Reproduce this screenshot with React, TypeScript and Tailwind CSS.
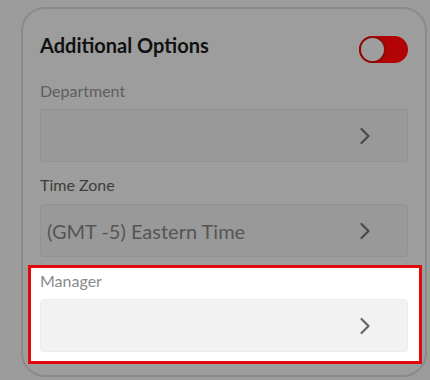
import React from "react";

function Chevron({ color }: { color: string }) {
  return (
    <svg width="12" height="18" viewBox="0 0 12 18" fill="none">
      <path d="M2.5 2 L9.5 9 L2.5 16" stroke={color} strokeWidth="2.2" strokeLinecap="round" strokeLinejoin="round" />
    </svg>
  );
}

export default function App() {
  return (
    <div
      className="w-[430px] h-[380px] bg-[#9c9c9c] overflow-hidden pl-[21px] pt-[7px]"
      style={{ fontFamily: "Lato, 'Open Sans', sans-serif" }}
    >
      <div className="w-[406px] h-[370px] rounded-[24px] border-2 border-[#8a8a8a] bg-[#9d9d9d] px-[17px] pt-[27px]">
        <div className="flex items-start justify-between h-[27px]">
          <span className="text-[20px] font-bold text-[#111] leading-[18px]">Additional Options</span>
          <div className="w-[49px] h-[27px] rounded-full bg-[#b20404] flex items-center p-0">
            <div className="w-[27px] h-[27px] rounded-full bg-[#9e9e9e] border-[2.5px] border-[#8f0a0a]" />
          </div>
        </div>

        <div className="mt-[18px] text-[16px] leading-[20px] text-[#5e5e5e]">Department</div>
        <div className="mt-[8px] h-[53px] rounded-[4px] border border-[#929292] bg-[#999999] flex items-center justify-end pr-[36px]">
          <Chevron color="#4a4a4a" />
        </div>

        <div className="mt-[13px] text-[16px] leading-[20px] text-[#3e3e3e]">Time Zone</div>
        <div className="mt-[9px] h-[53px] rounded-[4px] border border-[#929292] bg-[#999999] flex items-center justify-between pl-[6px] pr-[36px]">
          <span className="text-[20px] text-[#555]">(GMT -5) Eastern Time</span>
          <Chevron color="#4a4a4a" />
        </div>

        <div className="mt-[8px] -ml-[12px] -mr-[14px] h-[99px] border-[3px] border-[#e10a0a] bg-white pl-[9px] pr-[11px] pt-[3px]">
          <div className="text-[16px] leading-[20px] text-[#8a8a8a]">Manager</div>
          <div className="mt-[8px] h-[53px] rounded-[4px] border border-[#ececec] bg-[#f2f2f2] flex items-center justify-end pr-[36px]">
            <Chevron color="#666" />
          </div>
        </div>
      </div>
    </div>
  );
}
